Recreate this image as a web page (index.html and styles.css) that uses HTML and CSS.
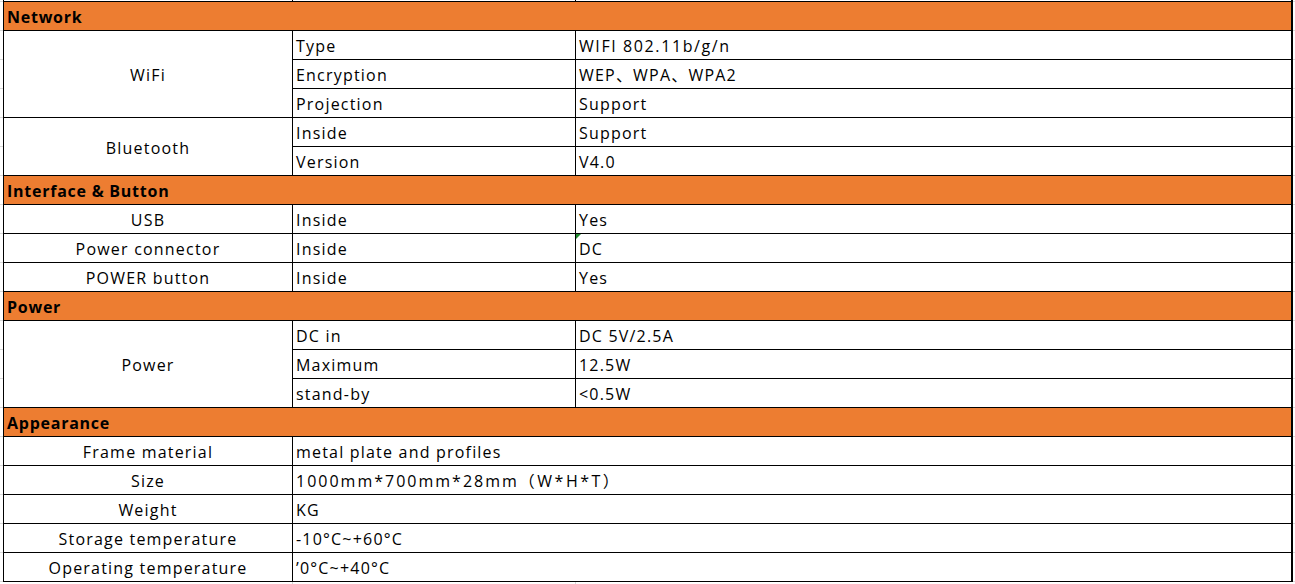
FILE: index.html
```html
<!DOCTYPE html>
<html lang="en">
<head>
<meta charset="utf-8">
<title>Specifications</title>
<link rel="stylesheet" href="styles.css">
</head>
<body>
<table class="spec">
  <colgroup>
    <col class="c1">
    <col class="c2">
    <col class="c3">
  </colgroup>
  <tbody>
    <tr class="stub"><td></td><td></td><td></td></tr>
    <tr class="section"><td colspan="3">Network</td></tr>
    <tr><td class="name" rowspan="3">WiFi</td><td>Type</td><td class="digits">WIFI 802.11b/g/n</td></tr>
    <tr><td>Encryption</td><td>WEP、WPA、WPA2</td></tr>
    <tr><td>Projection</td><td>Support</td></tr>
    <tr><td class="name" rowspan="2">Bluetooth</td><td>Inside</td><td>Support</td></tr>
    <tr><td>Version</td><td>V4.0</td></tr>
    <tr class="section"><td colspan="3">Interface &amp; Button</td></tr>
    <tr><td class="name">USB</td><td>Inside</td><td>Yes</td></tr>
    <tr><td class="name">Power connector</td><td>Inside</td><td class="flag">DC</td></tr>
    <tr><td class="name">POWER button</td><td>Inside</td><td>Yes</td></tr>
    <tr class="section"><td colspan="3">Power</td></tr>
    <tr><td class="name" rowspan="3">Power</td><td>DC in</td><td>DC 5V/2.5A</td></tr>
    <tr><td>Maximum</td><td>12.5W</td></tr>
    <tr><td>stand-by</td><td>&lt;0.5W</td></tr>
    <tr class="section"><td colspan="3">Appearance</td></tr>
    <tr><td class="name">Frame material</td><td colspan="2">metal plate and profiles</td></tr>
    <tr><td class="name">Size</td><td colspan="2"><span class="num">1000mm*700mm*28mm</span><span class="paren">（W*H*T）</span></td></tr>
    <tr><td class="name">Weight</td><td colspan="2">KG</td></tr>
    <tr><td class="name">Storage temperature</td><td colspan="2">-10°C~+60°C</td></tr>
    <tr><td class="name">Operating temperature</td><td colspan="2">’0°C~+40°C</td></tr>
  </tbody>
</table>
</body>
</html>
```

FILE: styles.css
```css
html, body {
  margin: 0;
  padding: 0;
}

body {
  width: 1295px;
  height: 584px;
  overflow: hidden;
  background-color: #ffffff;
  background-image:
    linear-gradient(to right, transparent 292px, #d9d9d9 292px, #d9d9d9 293px, transparent 293px,
                              transparent 575px, #d9d9d9 575px, #d9d9d9 576px, transparent 576px),
    repeating-linear-gradient(to bottom, transparent 0, transparent 1px, #d9d9d9 1px, #d9d9d9 2px, transparent 2px, transparent 29px);
  font-family: "Open Sans", "Noto Sans CJK SC", sans-serif;
  font-size: 16px;
  color: #000000;
}

.spec {
  margin-left: 3px;
  border-collapse: separate;
  border-spacing: 0;
  table-layout: fixed;
  width: 1289px;
  border-left: 1px solid #000;
  background: #ffffff;
}

.c1 { width: 289px; }
.c2 { width: 283px; }
.c3 { width: 717px; }

.spec td {
  height: 26px;
  padding: 2px 2px 0 3px;
  border-right: 1px solid #000;
  border-bottom: 1px solid #000;
  vertical-align: middle;
  white-space: nowrap;
  line-height: 26px;
  letter-spacing: 1.2px;
  box-sizing: content-box;
}

.spec td:last-child {
  border-right-width: 2px;
}

.spec .stub td {
  height: 1px;
  padding: 0;
  line-height: 0;
  font-size: 0;
}

.spec .section td {
  background: #ed7d31;
  font-weight: 700;
  letter-spacing: 0.75px;
  padding-left: 3px;
}

.spec td.name {
  text-align: center;
  padding-left: 2px;
}

.spec td.digits {
  letter-spacing: 1.6px;
}

.num {
  letter-spacing: 2px;
}

.paren {
  letter-spacing: 2.5px;
}

.spec td.flag {
  position: relative;
}

.spec td.flag::before {
  content: "";
  position: absolute;
  left: 0;
  top: 0;
  border-top: 5px solid #1e8a2e;
  border-right: 5px solid transparent;
}
```
